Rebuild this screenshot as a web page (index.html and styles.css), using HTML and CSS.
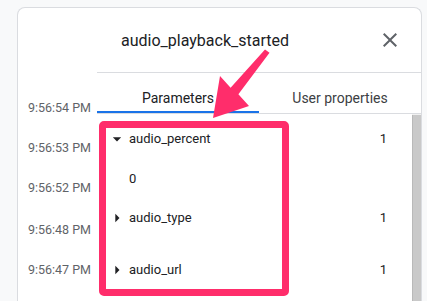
FILE: index.html
```html
<!DOCTYPE html>
<html lang="en">
<head>
    <meta charset="UTF-8">
    <meta name="viewport" content="width=device-width, initial-scale=1.0">
    <title>audio_playback_started</title>
    <link rel="stylesheet" href="styles.css">
</head>
<body>
    <div class="dialog">
        <!-- event times on the left -->
        <div class="time-column">
            <div class="time-row">9:56:54 PM</div>
            <div class="time-row">9:56:53 PM</div>
            <div class="time-row">9:56:52 PM</div>
            <div class="time-row time-row-gap">9:56:48 PM</div>
            <div class="time-row">9:56:47 PM</div>
        </div>

        <div class="panel">
            <div class="panel-header">
                <h1 class="panel-title">audio_playback_started</h1>
                <button class="close-btn" aria-label="Close">
                    <svg viewBox="0 0 24 24" width="24" height="24"><path d="M19 6.41L17.59 5 12 10.59 6.41 5 5 6.41 10.59 12 5 17.59 6.41 19 12 13.41 17.59 19 19 17.59 13.41 12z"/></svg>
                </button>
            </div>

            <div class="tabs">
                <div class="tab active">Parameters</div>
                <div class="tab">User properties</div>
            </div>

            <div class="tab-body">
                <div class="param-list">
                    <div class="param-row">
                        <svg class="caret" viewBox="0 0 24 24" width="20" height="20"><path d="M7 10l5 5 5-5z"/></svg>
                        <span class="param-name">audio_percent</span>
                        <span class="param-count">1</span>
                    </div>
                    <div class="param-row param-value">
                        <span class="param-name">0</span>
                    </div>
                    <div class="param-row">
                        <svg class="caret" viewBox="0 0 24 24" width="20" height="20"><path d="M10 17l5-5-5-5v10z"/></svg>
                        <span class="param-name">audio_type</span>
                        <span class="param-count">1</span>
                    </div>
                    <div class="param-row param-row-gap">
                        <svg class="caret" viewBox="0 0 24 24" width="20" height="20"><path d="M10 17l5-5-5-5v10z"/></svg>
                        <span class="param-name">audio_url</span>
                        <span class="param-count">1</span>
                    </div>
                </div>
                <div class="scrollbar"><div class="scroll-thumb"></div></div>
            </div>
        </div>
    </div>

    <!-- annotation drawn over the screenshot -->
    <div class="highlight-box"></div>
    <svg class="highlight-arrow" viewBox="0 0 427 301" width="427" height="301">
        <polygon points="265,49.4 269.5,52.8 238.4,94.2 249,106 213,118 220,76 230.6,87.8"/>
    </svg>
</body>
</html>
```

FILE: styles.css
```css
body {
    margin: 0;
    padding: 7px 5px 0 17px;
    height: 301px;
    box-sizing: border-box;
    overflow: hidden;
    background-color: #f8f9fa;
    font-family: Roboto, "Liberation Sans", sans-serif;
    color: #202124;
}

.dialog {
    display: flex;
    height: 294px;
    overflow: hidden;
    background-color: #ffffff;
    border: 1px solid #dadce0;
    border-bottom: none;
    border-radius: 8px 8px 0 0;
}

/* left column with the timestamps */
.time-column {
    width: 79px;
    padding-top: 80px;
    flex-shrink: 0;
}

.time-row {
    height: 40px;
    line-height: 40px;
    padding-right: 6px;
    text-align: right;
    font-size: 12.5px;
    color: #5f6368;
}

.time-row-gap {
    margin-top: 2px;
}

.panel {
    flex: 1;
    display: flex;
    flex-direction: column;
    min-width: 0;
}

.panel-header {
    height: 64px;
    flex-shrink: 0;
    display: flex;
    align-items: center;
    justify-content: space-between;
    padding: 0 19px 0 24px;
    border-bottom: 1px solid #dadce0;
}

.panel-title {
    margin: 0;
    font-size: 16px;
    font-weight: 400;
    color: #202124;
}

.close-btn {
    width: 24px;
    height: 24px;
    padding: 0;
    border: none;
    background: none;
    display: flex;
}

.close-btn svg {
    fill: #5f6368;
}

.tabs {
    display: flex;
    flex-shrink: 0;
    border-bottom: 1px solid #dadce0;
}

.tab {
    flex: 1;
    text-align: center;
    font-size: 14px;
    line-height: 16px;
    padding: 17px 0 5px;
    color: #3c4043;
    border-bottom: 2px solid transparent;
}

.tab.active {
    color: #202124;
    border-bottom-color: #1a73e8;
}

.tab-body {
    flex: 1;
    display: flex;
    min-height: 0;
}

.param-list {
    flex: 1;
    padding-top: 5px;
}

.param-row {
    height: 40px;
    display: flex;
    align-items: center;
    padding: 0 25px 0 10px;
    font-size: 13px;
    line-height: 20px;
}

/* a little more room before the last parameter */
.param-row-gap {
    margin-top: 12px;
}

/* child value rows line up with the names */
.param-value {
    padding-left: 32px;
    height: 39px;
}

.caret {
    fill: #202124;
    margin-right: 2px;
    flex-shrink: 0;
}

.param-name {
    flex: 1;
    color: #202124;
}

.param-count {
    color: #202124;
}

.scrollbar {
    width: 9px;
    padding-top: 1px;
    background-color: #f1f1f1;
}

.scroll-thumb {
    height: 100%;
    background-color: #c9c9c9;
    border-left: 1px solid #b9b9b9;
}

.highlight-box {
    position: absolute;
    left: 99px;
    top: 121px;
    width: 190px;
    height: 175px;
    box-sizing: border-box;
    border: 7px solid #ff2d6b;
    border-radius: 5px;
    pointer-events: none;
}

.highlight-arrow {
    position: absolute;
    left: 0;
    top: 0;
    fill: #ff2d6b;
    pointer-events: none;
}
```
